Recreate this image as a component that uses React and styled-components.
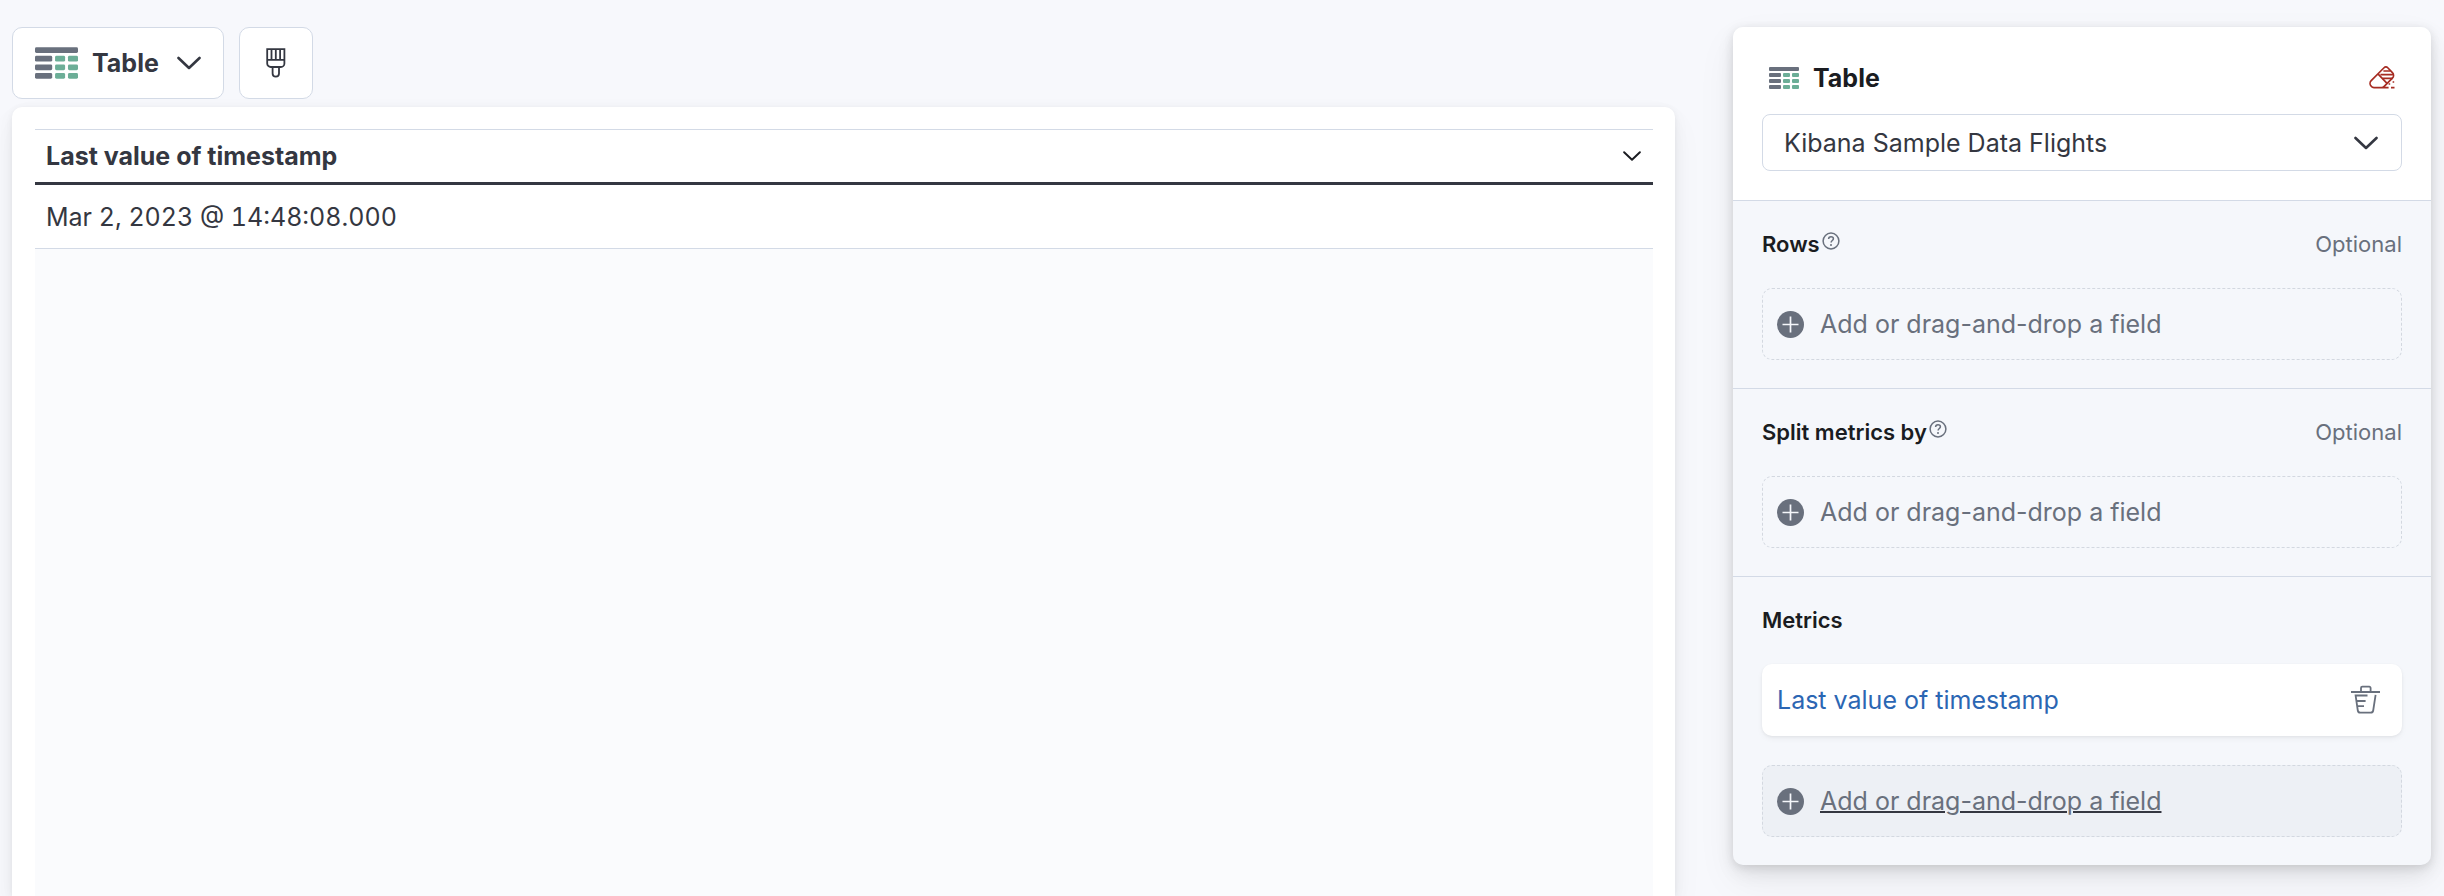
import React from 'react'
import styled, { createGlobalStyle } from 'styled-components'

const GlobalStyle = createGlobalStyle`
  *, *::before, *::after {
    box-sizing: border-box;
  }

  body {
    margin: 0;
    background: #f7f8fc;
    color: #343741;
    font-family: Inter, 'Liberation Sans', sans-serif;
    font-size: 25px;
    line-height: 36px;
  }

  button, select {
    font: inherit;
    color: inherit;
    margin: 0;
    cursor: pointer;
  }
`

const Page = styled.div`
  display: flex;
  gap: 58px;
  min-height: 100vh;
  padding: 27px 13px 0 12px;
`

const Workspace = styled.main`
  flex: 1;
  min-width: 0;
  display: flex;
  flex-direction: column;
  gap: 8px;
`

const Toolbar = styled.div`
  display: flex;
  gap: 15px;
`

const ToolbarButton = styled.button`
  display: flex;
  align-items: center;
  justify-content: center;
  gap: 14px;
  height: 72px;
  padding: 0 22px;
  min-width: 74px;
  border: 1px solid #d3dae6;
  border-radius: 10px;
  background: #fff;
  font-weight: 700;
`

const ButtonLabel = styled.span`
  margin-right: 4px;
`

const ChartPanel = styled.section`
  flex: 1;
  display: flex;
  flex-direction: column;
  padding: 22px 22px 0 23px;
  border-radius: 10px 10px 0 0;
  background: #fff;
  box-shadow: 0 1px 6px rgba(0, 0, 0, 0.05), 0 6px 16px rgba(0, 0, 0, 0.05), 0 14px 34px rgba(0, 0, 0, 0.04);
`

const Grid = styled.div`
  flex: 1;
  background: #fafbfd;
`

const DataTable = styled.table`
  width: 100%;
  border-collapse: separate;
  border-spacing: 0;
  background: #fff;
`

const HeaderCell = styled.th`
  height: 56px;
  padding: 0 12px 0 11px;
  border-top: 1px solid #d3dae6;
  border-bottom: 3px solid #343741;
  text-align: left;
  font-weight: 700;
`

const HeaderContent = styled.div`
  display: flex;
  align-items: center;
  justify-content: space-between;
`

const Cell = styled.td`
  height: 64px;
  padding: 0 11px;
  border-bottom: 1px solid #d3dae6;
  font-feature-settings: 'tnum';
`

const IconButton = styled.button`
  display: flex;
  padding: 0;
  border: 0;
  background: none;
`

const Sidebar = styled.aside`
  flex: 0 0 698px;
  align-self: flex-start;
  border-radius: 10px;
  background: #f5f7fb;
  box-shadow: 0 2px 10px rgba(0, 0, 0, 0.1), 0 8px 18px rgba(0, 0, 0, 0.08), 0 16px 40px rgba(0, 0, 0, 0.06);
`

const SidebarHeader = styled.header`
  padding: 33px 29px 29px;
  border-radius: 10px 10px 0 0;
  background: #fff;
`

const TitleRow = styled.div`
  display: flex;
  align-items: center;
  gap: 14px;
  padding: 0 7px;
  margin-bottom: 18px;
`

const Title = styled.h2`
  flex: 1;
  margin: 0;
  color: #1a1c21;
  font-size: 25px;
  font-weight: 700;
`

const SourceField = styled.label`
  display: grid;
  align-items: center;

  > * {
    grid-area: 1 / 1;
  }

  > svg {
    justify-self: end;
    margin-right: 24px;
    pointer-events: none;
  }
`

const SourceSelect = styled.select`
  appearance: none;
  width: 100%;
  height: 57px;
  padding: 0 64px 0 21px;
  border: 1px solid #d3dae6;
  border-radius: 8px;
  background: #fff;
`

const Group = styled.section`
  padding: 29px 29px 28px;
  border-top: 1px solid #d3dae6;
`

const GroupHeader = styled.div`
  display: flex;
  justify-content: space-between;
  margin-bottom: 30px;
  font-size: 22px;
  line-height: 28px;
`

const GroupTitle = styled.h3`
  display: flex;
  gap: 2px;
  margin: 0;
  color: #1a1c21;
  font-size: 22px;
  font-weight: 600;

  > svg {
    margin-top: 2px;
  }
`

const Optional = styled.span`
  color: #69707d;
`

const Dimensions = styled.div`
  display: flex;
  flex-direction: column;
  gap: 29px;
`

const Dimension = styled.div`
  display: flex;
  align-items: center;
  justify-content: space-between;
  height: 72px;
  padding: 0 21px 0 15px;
  border-radius: 10px;
  background: #fff;
  box-shadow: 0 1px 3px rgba(0, 0, 0, 0.06), 0 3px 6px rgba(0, 0, 0, 0.04);
`

const DimensionLink = styled.a`
  color: #2b66b3;
  text-decoration: none;
`

const DropButton = styled.button`
  display: flex;
  align-items: center;
  gap: 16px;
  width: 100%;
  height: 72px;
  padding: 0 14px;
  border: 1px dashed #d3d8e0;
  border-radius: 10px;
  background: ${props => props.$active ? '#edf0f5' : 'transparent'};
  color: #69707d;
  text-align: left;
`

const DropLabel = styled.span`
  text-decoration: ${props => props.$active ? 'underline #343741 2px' : 'none'};
`

const TableIcon = ({ width, height }) => (
  <svg width={width} height={height} viewBox="0 0 30 22" aria-hidden="true">
    <rect width="30" height="4" rx="1" fill="#69707d" />
    {[6, 12, 18].map(y => (
      <g key={y}>
        <rect y={y} width="12" height="4" rx="1" fill="#69707d" />
        <rect x="14" y={y} width="7" height="4" rx="1" fill="#6cae97" />
        <rect x="23" y={y} width="7" height="4" rx="1" fill="#6cae97" />
      </g>
    ))}
  </svg>
)

const Chevron = ({ size, color = '#343741', weight = 2.6 }) => (
  <svg width={size} height={size} viewBox="0 0 24 24" fill="none" stroke={color} strokeWidth={weight} strokeLinecap="round" strokeLinejoin="round" aria-hidden="true">
    <path d="M1.5 7 12 17 22.5 7" />
  </svg>
)

const BrushIcon = () => (
  <svg width="20" height="30" viewBox="0 0 20 30" fill="none" stroke="#343741" strokeWidth="1.8" aria-hidden="true">
    <path d="M1.2 1.2h17.2v14.3a3.5 3.5 0 0 1-3.5 3.5H4.7a3.5 3.5 0 0 1-3.5-3.5zM1.2 11.8h17.2M5.5 1.2v10.6M9.8 1.2v10.6M14.1 1.2v10.6" />
    <path d="M6.6 19v6.4a3.2 3.2 0 0 0 6.4 0V19" />
  </svg>
)

const EraserIcon = () => (
  <svg width="26" height="24" viewBox="0 0 26 24" fill="none" stroke="#a62c22" strokeWidth="1.7" aria-hidden="true">
    <path d="M14.8 2 2.2 14.6a4 4 0 0 0 0 5.6A4 4 0 0 0 5 21.6h7.6a4 4 0 0 0 2.6-1.2l8.2-8.2a4 4 0 0 0 0-5.6L19 2a3 3 0 0 0-4.2 0zM9.4 8.4l8.4 8.8M12.6 21.6h7M22 21.6h3.5" />
    <path d="M14.4 5h7M11.4 8.6h13M13.6 12.4h10" />
    <path d="M19.6 18h1.6M23.6 16h1.6" />
  </svg>
)

const TrashIcon = () => (
  <svg width="30" height="30" viewBox="0 0 30 30" fill="none" stroke="#69707d" strokeWidth="1.8" aria-hidden="true">
    <path d="M0 7h29M10 7V3a1.3 1.3 0 0 1 1.3-1.3h7A1.3 1.3 0 0 1 19.6 3v4" />
    <path d="M16.5 10.5H4.6l2.2 15a2.6 2.6 0 0 0 2.6 2.2h10.2a2.6 2.6 0 0 0 2.6-2.2l2.4-15.6M5.6 16h9M6.4 21.2H13" />
  </svg>
)

const HelpIcon = () => (
  <svg width="18" height="18" viewBox="0 0 18 18" fill="none" stroke="#69707d" strokeWidth="1.5" aria-hidden="true">
    <circle cx="9" cy="9" r="7.9" />
    <path d="M6.6 7.1c0-1.5 1-2.4 2.4-2.4s2.4.9 2.4 2.1c0 1.7-2.3 1.8-2.3 3.8" />
    <circle cx="9" cy="13" r="1" fill="#69707d" stroke="none" />
  </svg>
)

const PlusIcon = () => (
  <svg width="27" height="27" viewBox="0 0 27 27" aria-hidden="true">
    <circle cx="13.5" cy="13.5" r="13.5" fill="#69707d" />
    <path d="M5.5 13.5h16M13.5 5.5v16" stroke="#f5f7fb" strokeWidth="1.7" />
  </svg>
)

const DropZone = ({ active }) => (
  <DropButton type="button" $active={active}>
    <PlusIcon />
    <DropLabel $active={active}>Add or drag-and-drop a field</DropLabel>
  </DropButton>
)

const DimensionGroup = ({ title, optional, children }) => (
  <Group>
    <GroupHeader>
      <GroupTitle>
        {title}
        {optional && <HelpIcon />}
      </GroupTitle>
      {optional && <Optional>Optional</Optional>}
    </GroupHeader>
    <Dimensions>{children}</Dimensions>
  </Group>
)

const App = () => {
  return (
    <>
      <GlobalStyle />
      <Page>
        <Workspace>
          <Toolbar>
            <ToolbarButton type="button">
              <TableIcon width={43} height={32} />
              <ButtonLabel>Table</ButtonLabel>
              <Chevron size={24} />
            </ToolbarButton>
            <ToolbarButton type="button" aria-label="Visual options">
              <BrushIcon />
            </ToolbarButton>
          </Toolbar>
          <ChartPanel>
            <Grid>
              <DataTable>
                <thead>
                  <tr>
                    <HeaderCell scope="col">
                      <HeaderContent>
                        Last value of timestamp
                        <IconButton type="button" aria-label="Column actions">
                          <Chevron size={18} color="#1a1c21" />
                        </IconButton>
                      </HeaderContent>
                    </HeaderCell>
                  </tr>
                </thead>
                <tbody>
                  <tr>
                    <Cell>Mar 2, 2023 @ 14:48:08.000</Cell>
                  </tr>
                </tbody>
              </DataTable>
            </Grid>
          </ChartPanel>
        </Workspace>

        <Sidebar>
          <SidebarHeader>
            <TitleRow>
              <TableIcon width={30} height={22} />
              <Title>Table</Title>
              <IconButton type="button" aria-label="Clear layer">
                <EraserIcon />
              </IconButton>
            </TitleRow>
            <SourceField>
              <SourceSelect aria-label="Data view" defaultValue="flights">
                <option value="flights">Kibana Sample Data Flights</option>
              </SourceSelect>
              <Chevron size={24} />
            </SourceField>
          </SidebarHeader>
          <DimensionGroup title="Rows" optional>
            <DropZone />
          </DimensionGroup>
          <DimensionGroup title="Split metrics by" optional>
            <DropZone />
          </DimensionGroup>
          <DimensionGroup title="Metrics">
            <Dimension>
              <DimensionLink href="#timestamp">Last value of timestamp</DimensionLink>
              <IconButton type="button" aria-label="Remove field">
                <TrashIcon />
              </IconButton>
            </Dimension>
            <DropZone active />
          </DimensionGroup>
        </Sidebar>
      </Page>
    </>
  )
}

export default App
